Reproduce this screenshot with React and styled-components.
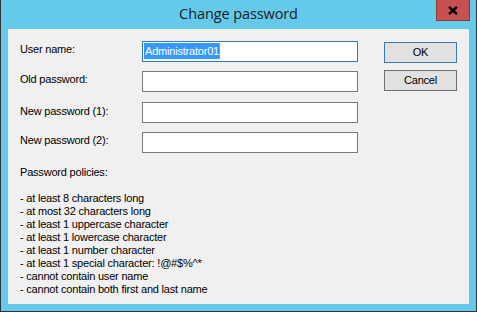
import React from "react";
import styled, { createGlobalStyle } from "styled-components";

const Global = createGlobalStyle`
  html, body { margin: 0; padding: 0; background: #ffffff; }
  * { box-sizing: border-box; }
`;

const Window = styled.div`
  width: 477px;
  height: 312px;
  background: #65caea;
  border: 1px solid #2e3338;
  border-top: none;
  padding: 0 7px 7px 7px;
  display: flex;
  flex-direction: column;
`;

const TitleBar = styled.div`
  height: 29px;
  margin: 0 -7px;
  display: grid;
  grid-template-columns: 1fr auto 1fr;
  align-items: start;
`;

const Title = styled.div`
  grid-column: 2;
  font-family: "Open Sans", "Noto Sans", sans-serif;
  font-size: 14.5px;
  color: #1b1b1b;
  line-height: 20px;
  padding-top: 4px;
  letter-spacing: -0.1px;
`;

const CloseButton = styled.div`
  grid-column: 3;
  justify-self: end;
  margin-right: 6px;
  width: 34px;
  height: 21px;
  background: #c75050;
  border: 1px solid #8a3c3c;
  border-top: none;
  display: flex;
  align-items: center;
  justify-content: center;
`;

const Client = styled.div`
  flex: 1;
  background: #f0f0f0;
  padding: 12px 11px 0 12px;
  font-family: "Liberation Sans", Arial, sans-serif;
  font-size: 11px;
  letter-spacing: -0.2px;
  color: #000;
`;

const Top = styled.div`
  display: flex;
  align-items: flex-start;
`;

const Form = styled.div`
  display: grid;
  grid-template-columns: 122px 216px;
  grid-template-rows: 30px 31px 30px 21px;
`;

const Label = styled.div`
  line-height: 13px;
  padding-top: ${(p) => p.$offset || 0}px;
`;

const Field = styled.div`
  height: 21px;
  background: #ffffff;
  border: 1px solid ${(p) => (p.$focused ? "#3b78b0" : "#7a7a7a")};
  padding: 1px 0 0 1px;
  display: flex;
  align-items: flex-start;
`;

const Selection = styled.span`
  background: #3399ff;
  color: #ffffff;
  height: 16px;
  line-height: 16px;
  padding: 0 0 0 1px;
  border-right: 1px solid #d98a3c;
`;

const Buttons = styled.div`
  margin-left: 26px;
  margin-top: 1px;
  display: flex;
  flex-direction: column;
  gap: 7px;
`;

const Button = styled.div`
  width: 73px;
  height: 21px;
  background: #e1e1e1;
  border: 1px solid ${(p) => (p.$default ? "#3b78b0" : "#707070")};
  display: flex;
  align-items: center;
  justify-content: center;
  line-height: 13px;
`;

const Policies = styled.div`
  margin-top: 13px;
  line-height: 13px;
  white-space: pre-line;
`;

const policies = `Password policies:

- at least 8 characters long
- at most 32 characters long
- at least 1 uppercase character
- at least 1 lowercase character
- at least 1 number character
- at least 1 special character: !@#$%^*
- cannot contain user name
- cannot contain both first and last name`;

export default function App() {
  return (
    <>
      <Global />
      <Window>
        <TitleBar>
          <Title>Change password</Title>
          <CloseButton>
            <svg width="10" height="9" viewBox="0 0 10 9">
              <path d="M1 0.8 L9 8.2 M9 0.8 L1 8.2" stroke="#000" strokeWidth="2.4" />
            </svg>
          </CloseButton>
        </TitleBar>
        <Client>
          <Top>
            <Form>
              <Label $offset={2}>User name:</Label>
              <Field $focused>
                <Selection>Administrator01</Selection>
              </Field>
              <Label $offset={2}>Old password:</Label>
              <Field />
              <Label $offset={3}>New password (1):</Label>
              <Field />
              <Label $offset={2}>New password (2):</Label>
              <Field />
            </Form>
            <Buttons>
              <Button $default>OK</Button>
              <Button>Cancel</Button>
            </Buttons>
          </Top>
          <Policies>{policies}</Policies>
        </Client>
      </Window>
    </>
  );
}
